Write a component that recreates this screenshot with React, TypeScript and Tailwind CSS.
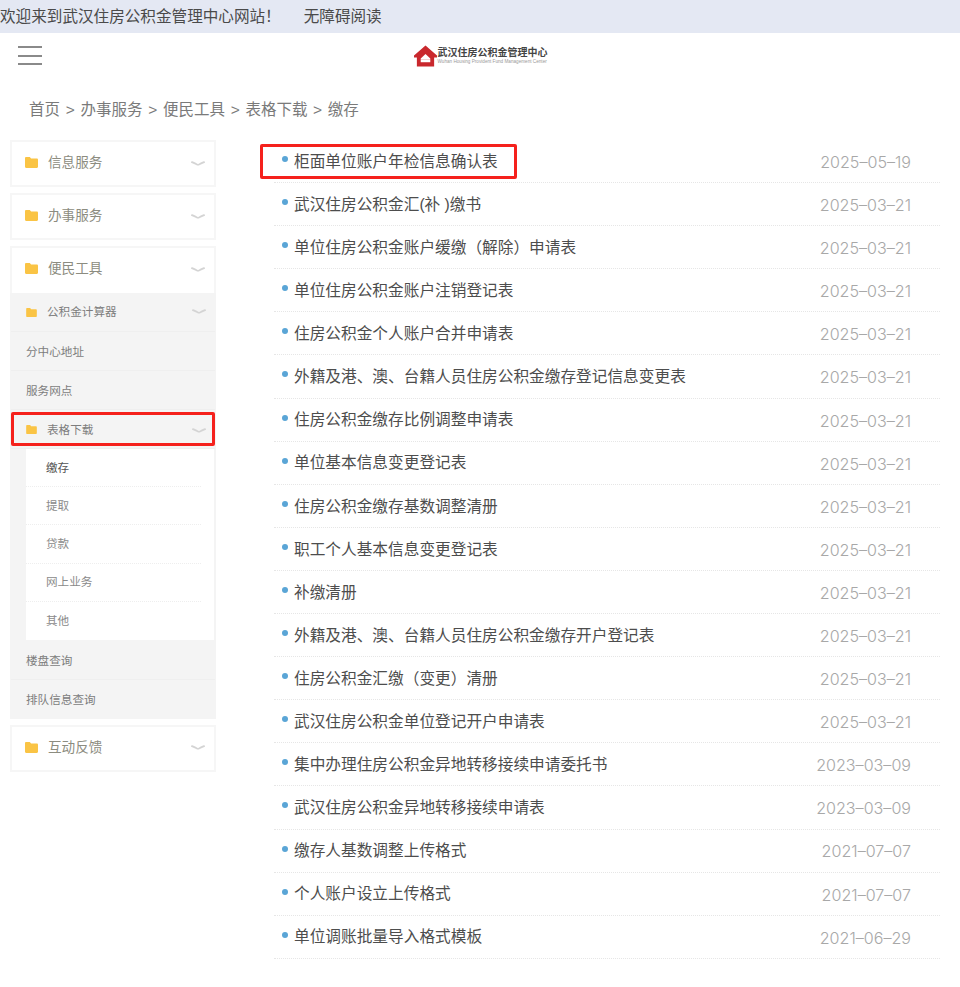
import React from "react";

const FONT = "[font-family:'Liberation_Sans','Noto_Sans_CJK_SC',sans-serif]";

const rows: [string, string][] = [
  ["柜面单位账户年检信息确认表", "2025–05–19"],
  ["武汉住房公积金汇(补 )缴书", "2025–03–21"],
  ["单位住房公积金账户缓缴（解除）申请表", "2025–03–21"],
  ["单位住房公积金账户注销登记表", "2025–03–21"],
  ["住房公积金个人账户合并申请表", "2025–03–21"],
  ["外籍及港、澳、台籍人员住房公积金缴存登记信息变更表", "2025–03–21"],
  ["住房公积金缴存比例调整申请表", "2025–03–21"],
  ["单位基本信息变更登记表", "2025–03–21"],
  ["住房公积金缴存基数调整清册", "2025–03–21"],
  ["职工个人基本信息变更登记表", "2025–03–21"],
  ["补缴清册", "2025–03–21"],
  ["外籍及港、澳、台籍人员住房公积金缴存开户登记表", "2025–03–21"],
  ["住房公积金汇缴（变更）清册", "2025–03–21"],
  ["武汉住房公积金单位登记开户申请表", "2025–03–21"],
  ["集中办理住房公积金异地转移接续申请委托书", "2023–03–09"],
  ["武汉住房公积金异地转移接续申请表", "2023–03–09"],
  ["缴存人基数调整上传格式", "2021–07–07"],
  ["个人账户设立上传格式", "2021–07–07"],
  ["单位调账批量导入格式模板", "2021–06–29"],
];

function Folder({ small }: { small?: boolean }) {
  return (
    <svg viewBox="0 0 13 11" className={small ? "w-[11px] h-[9px] shrink-0" : "w-[13px] h-[11px] shrink-0 mb-[2px]"}>
      <path d="M1.2 0h3.6l1.3 1.6h5.7c.7 0 1.2.5 1.2 1.2v7c0 .7-.5 1.2-1.2 1.2H1.2C.5 11 0 10.500 0 9.800V1.200C0 .5.500 0 1.200 0z" fill="#fac445" />
    </svg>
  );
}

function Chevron() {
  return (
    <svg viewBox="0 0 14 6" className="w-[14px] h-[6px] shrink-0" fill="none">
      <path d="M1 1.200Q7 3.800 7 4.600Q7 3.800 13 1.200" stroke="#d4d4d4" strokeWidth="2" strokeLinecap="round" />
    </svg>
  );
}

function TopItem({ label }: { label: string }) {
  return (
    <div className="h-[47px] border-2 border-[#f6f6f6] bg-white flex items-center pl-[13px] pr-[9px]">
      <Folder />
      <span className="ml-[10px] flex-1 text-[13.600px] text-[#8c8c80]">{label}</span>
      <Chevron />
    </div>
  );
}

function SubHead({ label, boxed }: { label: string; boxed?: boolean }) {
  return (
    <div className="relative h-[39px] border-b border-[#efefef] flex items-center pl-[15px] pr-[9px]">
      <Folder small />
      <span className={`ml-[10px] flex-1 text-[11.600px] text-[#7d7d7d] ${boxed ? "pt-[2px]" : ""}`}>{label}</span>
      <div className={boxed ? "pt-[3px]" : ""}>
        <Chevron />
      </div>
      {boxed && <div className="absolute left-0 right-0 top-[2px] bottom-[2px] border-[3px] border-[#f5211c] rounded-[2px]" />}
    </div>
  );
}

function SubLink({ label }: { label: string }) {
  return (
    <div className="h-[39px] pt-[2px] border-b border-[#efefef] flex items-center pl-[15px] text-[11.600px] text-[#7d7d7d]">{label}</div>
  );
}

function Leaf({ label, active, last }: { label: string; active?: boolean; last?: boolean }) {
  return (
    <div className={`h-[38.200px] mr-[13px] flex items-center pl-[20px] text-[11.600px] ${last ? "" : "border-b border-dotted border-[#eeeeee]"} ${active ? "text-[#555555]" : "text-[#8a8a8a]"}`}>
      {label}
    </div>
  );
}

export default function App() {
  return (
    <div className={`${FONT} w-[960px] h-[987px] bg-white overflow-hidden`}>
      <div className="h-[33px] bg-[#e4e8f3] flex items-center text-[15.600px] text-[#4a4a4a]">
        <span>欢迎来到武汉住房公积金管理中心网站！</span>
        <span className="ml-[23px]">无障碍阅读</span>
      </div>

      <header className="h-[44px] relative flex items-center justify-center">
        <div className="absolute left-[18px] top-[13px] w-[24px] flex flex-col gap-[6.500px]">
          <div className="h-[2px] bg-[#8a8a8a]" />
          <div className="h-[2px] bg-[#8a8a8a]" />
          <div className="h-[2px] bg-[#8a8a8a]" />
        </div>
        <div className="flex items-center ml-[1px] mt-[2px]">
          <svg viewBox="0 0 24 22" className="w-[23px] h-[22px] shrink-0">
            <path d="M12 0L24 10.500V12.500H21V22H3V12.500H0V10.500Z" fill="#c9282d" />
            <path d="M12 9L17 13.500V15H7V13.500Z" fill="#ffffff" />
            <rect x="7" y="15" width="10" height="2.500" fill="#ffffff" />
          </svg>
          <div className="ml-[1px] flex flex-col items-start w-[110px]">
            <span className="text-[10px] leading-[12px] font-bold text-[#444444] whitespace-nowrap">武汉住房公积金管理中心</span>
            <span className="text-[4.650px] leading-[6px] text-[#999999] whitespace-nowrap">Wuhan Housing Provident Fund Management Center</span>
          </div>
        </div>
      </header>

      <nav className="h-[63px] pl-[29px] pt-[22px] text-[15.500px] leading-[22px] text-[#7a7a7a] [word-spacing:1.400px]">
        首页 &gt; 办事服务 &gt; 便民工具 &gt; 表格下载 &gt; 缴存
      </nav>

      <div className="flex items-start">
        <aside className="ml-[10px] w-[206px] flex flex-col gap-[6px]">
          <TopItem label="信息服务" />
          <TopItem label="办事服务" />
          <div className="flex flex-col">
            <div className="h-[47px] pb-[2px] border-2 border-b-0 border-[#f6f6f6] bg-white flex items-center pl-[13px] pr-[9px]">
              <Folder />
              <span className="ml-[10px] flex-1 text-[13.600px] text-[#8c8c80]">便民工具</span>
              <Chevron />
            </div>
            <div className="bg-[#f4f4f4] flex flex-col px-px">
              <SubHead label="公积金计算器" />
              <SubLink label="分中心地址" />
              <SubLink label="服务网点" />
              <SubHead label="表格下载" boxed />
              <div className="ml-[15px] mr-px bg-white flex flex-col">
                <Leaf label="缴存" active />
                <Leaf label="提取" />
                <Leaf label="贷款" />
                <Leaf label="网上业务" />
                <Leaf label="其他" last />
              </div>
              <div className="h-[40px] pt-[3px] border-b border-[#efefef] flex items-center pl-[15px] text-[11.600px] text-[#7d7d7d]">楼盘查询</div>
              <div className="h-[39px] pt-[1px] flex items-center pl-[15px] text-[11.600px] text-[#7d7d7d]">排队信息查询</div>
            </div>
          </div>
          <TopItem label="互动反馈" />
        </aside>

        <main className="ml-[58px] w-[666px] flex flex-col">
          {rows.map(([title, date], i) => (
            <div key={i} className="relative h-[43.100px] shrink-0 pt-[1px] border-b border-dotted border-[#e6e6e6] flex items-center pr-[29px]">
              <span className="absolute left-[8px] top-[16px] w-[6px] h-[6px] rounded-full bg-[#5aa5d6]" />
              <span className="ml-[20px] flex-1 text-[15.680px] text-[#4d4d4d] whitespace-nowrap">{title}</span>
              <span className="pt-[1px] [font-family:Inter,sans-serif] font-light text-[16.100px] text-[#a8a8a8]">{date}</span>
              {i === 0 && <div className="absolute left-[-14px] top-[4px] w-[257px] h-[35px] border-[3px] border-[#f5211c] rounded-[2px]" />}
            </div>
          ))}
        </main>
      </div>
    </div>
  );
}
